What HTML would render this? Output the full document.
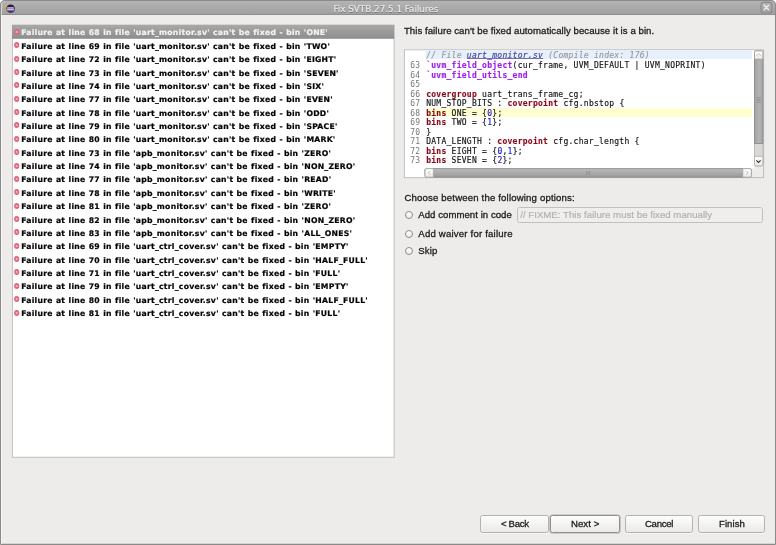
<!DOCTYPE html>
<html lang="en"><head><meta charset="utf-8"><title>Fix SVTB.27.5.1 Failures</title>
<style>
html,body{margin:0;padding:0}
body{width:776px;height:545px;overflow:hidden;background:#fff;position:relative;font-family:"Liberation Sans",sans-serif;color:#3a3a3a}
#win{position:absolute;left:0;top:0;width:776px;height:545px;box-sizing:border-box;background:#edecea;border-radius:5px 5px 0 0;overflow:hidden}
#content{position:absolute;left:0;top:0;width:776px;height:545px;filter:blur(0.3px)}
#frame{position:absolute;left:0;top:0;width:776px;height:545px;box-sizing:border-box;border:1px solid #8c8a88;border-radius:5px 5px 0 0;pointer-events:none;box-shadow:inset 1px 0 0 rgba(255,255,255,.55),inset 0 -1px 0 rgba(140,138,136,.25)}
#title{position:absolute;left:0;top:0;width:776px;height:14px;background:linear-gradient(#b6b6b6,#a1a1a1);border-bottom:1px solid #8f8f8f}
#title .t{position:absolute;left:333.4px;top:2.1px;font:8.8px/15px "DejaVu Sans","Liberation Sans",sans-serif;color:#e8e8e8;-webkit-text-stroke:0.2px #e8e8e8;white-space:pre;text-shadow:0 0.6px 0.4px rgba(0,0,0,.3)}
.r{position:absolute;left:13px;width:380px;height:13.4px;font:bold 7.7px/13px "DejaVu Sans","Liberation Sans",sans-serif;letter-spacing:0.255px;word-spacing:0.32px;color:#000;white-space:pre}
.r span{position:absolute;left:8.15px;top:1.1px;-webkit-text-stroke:0.2px currentColor}
.r.sel{color:#f2f2f2}
.r svg{position:absolute;left:0.8px;top:3.5px}
.lbl{position:absolute;white-space:pre;font-size:9.6px;line-height:12px;color:#1c1c1c;-webkit-text-stroke:0.3px #1c1c1c}
.cl{position:absolute;left:426.2px;font:8px/10px "DejaVu Sans Mono","Liberation Mono",monospace;letter-spacing:0.267px;color:#141414;-webkit-text-stroke:0.15px currentColor;white-space:pre}
.ln{position:absolute;left:410.2px;font:8px/10px "DejaVu Sans Mono","Liberation Mono",monospace;letter-spacing:0.267px;color:#787878;white-space:pre}
.k{color:#8b0a1a;font-weight:bold}
.m{color:#a020f0;font-weight:bold}
.n{color:#2020d0}
.c{color:#9a9a9a;font-style:italic}
.u{color:#45459c;font-style:italic;text-decoration:underline;text-decoration-thickness:0.7px;text-underline-offset:0.3px;text-decoration-color:#7070b8;text-decoration-skip-ink:none}
.radio{position:absolute;width:8px;height:8px;box-sizing:border-box;border:1px solid #8c8b88;border-radius:50%;background:linear-gradient(#fff,#ecebe9)}
#field{position:absolute;left:517px;top:207px;width:246px;height:15.5px;box-sizing:border-box;border:1px solid #c1c0bc;border-radius:2.5px;background:#efeeec}
.btn{position:absolute;top:514.5px;height:18px;box-sizing:border-box;border:1px solid #b3b2ae;border-radius:2.5px;background:linear-gradient(#fdfdfd,#ebeae8);box-shadow:0 1px 0 rgba(255,255,255,.6)}
</style></head>
<body>
<div id="win"><div id="content">
<div id="title"><svg width="11" height="10" viewBox="0 0 11 10" style="position:absolute;left:4.9px;top:3.6px"><defs><linearGradient id="eg" x1="0" y1="0" x2="0" y2="1"><stop offset="0" stop-color="#1f174d"/><stop offset="0.55" stop-color="#2f2468"/><stop offset="1" stop-color="#4a3c8c"/></linearGradient></defs><ellipse cx="4.9" cy="4.7" rx="4.7" ry="4.4" fill="#e39a3c"/><ellipse cx="5.7" cy="4.7" rx="4.3" ry="4.3" fill="url(#eg)"/><rect x="2.2" y="3.3" width="6.6" height="0.9" fill="#dcd9ee"/><rect x="1.9" y="4.6" width="7.3" height="1.1" fill="#ffffff"/><rect x="2.2" y="6" width="6.6" height="0.6" fill="#a9a3d0"/></svg><div class="t">Fix SVTB.27.5.1 Failures</div>
<svg width="14" height="14" viewBox="0 0 14 14" style="position:absolute;left:760px;top:1px"><defs><linearGradient id="cbg" x1="0" y1="0" x2="0" y2="1"><stop offset="0" stop-color="#b4b4b4"/><stop offset="1" stop-color="#a0a0a0"/></linearGradient></defs><rect x="1" y="1.3" width="10.9" height="10.7" rx="2.2" fill="url(#cbg)" stroke="#8b8b8b" stroke-width="1.2"/><path d="M4.2 4.2 L8.6 8.7 M8.6 4.2 L4.2 8.7" stroke="#ececec" stroke-width="1.5" stroke-linecap="round"/></svg>
</div>
<svg width="776" height="545" style="position:absolute;left:0;top:0"><rect x="12.4" y="25.1" width="381.7" height="432.2" fill="#fff" stroke="#bfbebb" stroke-width="1"/><defs><linearGradient id="selg" x1="0" y1="0" x2="0" y2="1"><stop offset="0" stop-color="#a8a8a8"/><stop offset="1" stop-color="#8d8d8d"/></linearGradient></defs><rect x="12" y="24.9" width="382.2" height="13.9" fill="url(#selg)"/></svg>
<div class="r sel" style="top:25.30px"><svg width="6" height="6.4" viewBox="0 0 6 6.4"><ellipse cx="2.7" cy="3" rx="2.6" ry="2.9" fill="#e4667a"/><path d="M2 2.2 L3.4 3.8 M3.4 2.2 L2 3.8" stroke="#fbe3e6" stroke-width="0.75"/></svg><span>Failure at line 68 in file 'uart_monitor.sv' can't be fixed - bin 'ONE'</span></div>
<div class="r" style="top:38.67px"><svg width="6" height="6.4" viewBox="0 0 6 6.4"><ellipse cx="2.7" cy="3" rx="2.6" ry="2.9" fill="#e4667a"/><path d="M2 2.2 L3.4 3.8 M3.4 2.2 L2 3.8" stroke="#fbe3e6" stroke-width="0.75"/></svg><span>Failure at line 69 in file 'uart_monitor.sv' can't be fixed - bin 'TWO'</span></div>
<div class="r" style="top:52.04px"><svg width="6" height="6.4" viewBox="0 0 6 6.4"><ellipse cx="2.7" cy="3" rx="2.6" ry="2.9" fill="#e4667a"/><path d="M2 2.2 L3.4 3.8 M3.4 2.2 L2 3.8" stroke="#fbe3e6" stroke-width="0.75"/></svg><span>Failure at line 72 in file 'uart_monitor.sv' can't be fixed - bin 'EIGHT'</span></div>
<div class="r" style="top:65.41px"><svg width="6" height="6.4" viewBox="0 0 6 6.4"><ellipse cx="2.7" cy="3" rx="2.6" ry="2.9" fill="#e4667a"/><path d="M2 2.2 L3.4 3.8 M3.4 2.2 L2 3.8" stroke="#fbe3e6" stroke-width="0.75"/></svg><span>Failure at line 73 in file 'uart_monitor.sv' can't be fixed - bin 'SEVEN'</span></div>
<div class="r" style="top:78.78px"><svg width="6" height="6.4" viewBox="0 0 6 6.4"><ellipse cx="2.7" cy="3" rx="2.6" ry="2.9" fill="#e4667a"/><path d="M2 2.2 L3.4 3.8 M3.4 2.2 L2 3.8" stroke="#fbe3e6" stroke-width="0.75"/></svg><span>Failure at line 74 in file 'uart_monitor.sv' can't be fixed - bin 'SIX'</span></div>
<div class="r" style="top:92.15px"><svg width="6" height="6.4" viewBox="0 0 6 6.4"><ellipse cx="2.7" cy="3" rx="2.6" ry="2.9" fill="#e4667a"/><path d="M2 2.2 L3.4 3.8 M3.4 2.2 L2 3.8" stroke="#fbe3e6" stroke-width="0.75"/></svg><span>Failure at line 77 in file 'uart_monitor.sv' can't be fixed - bin 'EVEN'</span></div>
<div class="r" style="top:105.52px"><svg width="6" height="6.4" viewBox="0 0 6 6.4"><ellipse cx="2.7" cy="3" rx="2.6" ry="2.9" fill="#e4667a"/><path d="M2 2.2 L3.4 3.8 M3.4 2.2 L2 3.8" stroke="#fbe3e6" stroke-width="0.75"/></svg><span>Failure at line 78 in file 'uart_monitor.sv' can't be fixed - bin 'ODD'</span></div>
<div class="r" style="top:118.89px"><svg width="6" height="6.4" viewBox="0 0 6 6.4"><ellipse cx="2.7" cy="3" rx="2.6" ry="2.9" fill="#e4667a"/><path d="M2 2.2 L3.4 3.8 M3.4 2.2 L2 3.8" stroke="#fbe3e6" stroke-width="0.75"/></svg><span>Failure at line 79 in file 'uart_monitor.sv' can't be fixed - bin 'SPACE'</span></div>
<div class="r" style="top:132.26px"><svg width="6" height="6.4" viewBox="0 0 6 6.4"><ellipse cx="2.7" cy="3" rx="2.6" ry="2.9" fill="#e4667a"/><path d="M2 2.2 L3.4 3.8 M3.4 2.2 L2 3.8" stroke="#fbe3e6" stroke-width="0.75"/></svg><span>Failure at line 80 in file 'uart_monitor.sv' can't be fixed - bin 'MARK'</span></div>
<div class="r" style="top:145.63px"><svg width="6" height="6.4" viewBox="0 0 6 6.4"><ellipse cx="2.7" cy="3" rx="2.6" ry="2.9" fill="#e4667a"/><path d="M2 2.2 L3.4 3.8 M3.4 2.2 L2 3.8" stroke="#fbe3e6" stroke-width="0.75"/></svg><span>Failure at line 73 in file 'apb_monitor.sv' can't be fixed - bin 'ZERO'</span></div>
<div class="r" style="top:159.00px"><svg width="6" height="6.4" viewBox="0 0 6 6.4"><ellipse cx="2.7" cy="3" rx="2.6" ry="2.9" fill="#e4667a"/><path d="M2 2.2 L3.4 3.8 M3.4 2.2 L2 3.8" stroke="#fbe3e6" stroke-width="0.75"/></svg><span>Failure at line 74 in file 'apb_monitor.sv' can't be fixed - bin 'NON_ZERO'</span></div>
<div class="r" style="top:172.37px"><svg width="6" height="6.4" viewBox="0 0 6 6.4"><ellipse cx="2.7" cy="3" rx="2.6" ry="2.9" fill="#e4667a"/><path d="M2 2.2 L3.4 3.8 M3.4 2.2 L2 3.8" stroke="#fbe3e6" stroke-width="0.75"/></svg><span>Failure at line 77 in file 'apb_monitor.sv' can't be fixed - bin 'READ'</span></div>
<div class="r" style="top:185.74px"><svg width="6" height="6.4" viewBox="0 0 6 6.4"><ellipse cx="2.7" cy="3" rx="2.6" ry="2.9" fill="#e4667a"/><path d="M2 2.2 L3.4 3.8 M3.4 2.2 L2 3.8" stroke="#fbe3e6" stroke-width="0.75"/></svg><span>Failure at line 78 in file 'apb_monitor.sv' can't be fixed - bin 'WRITE'</span></div>
<div class="r" style="top:199.11px"><svg width="6" height="6.4" viewBox="0 0 6 6.4"><ellipse cx="2.7" cy="3" rx="2.6" ry="2.9" fill="#e4667a"/><path d="M2 2.2 L3.4 3.8 M3.4 2.2 L2 3.8" stroke="#fbe3e6" stroke-width="0.75"/></svg><span>Failure at line 81 in file 'apb_monitor.sv' can't be fixed - bin 'ZERO'</span></div>
<div class="r" style="top:212.48px"><svg width="6" height="6.4" viewBox="0 0 6 6.4"><ellipse cx="2.7" cy="3" rx="2.6" ry="2.9" fill="#e4667a"/><path d="M2 2.2 L3.4 3.8 M3.4 2.2 L2 3.8" stroke="#fbe3e6" stroke-width="0.75"/></svg><span>Failure at line 82 in file 'apb_monitor.sv' can't be fixed - bin 'NON_ZERO'</span></div>
<div class="r" style="top:225.85px"><svg width="6" height="6.4" viewBox="0 0 6 6.4"><ellipse cx="2.7" cy="3" rx="2.6" ry="2.9" fill="#e4667a"/><path d="M2 2.2 L3.4 3.8 M3.4 2.2 L2 3.8" stroke="#fbe3e6" stroke-width="0.75"/></svg><span>Failure at line 83 in file 'apb_monitor.sv' can't be fixed - bin 'ALL_ONES'</span></div>
<div class="r" style="top:239.22px"><svg width="6" height="6.4" viewBox="0 0 6 6.4"><ellipse cx="2.7" cy="3" rx="2.6" ry="2.9" fill="#e4667a"/><path d="M2 2.2 L3.4 3.8 M3.4 2.2 L2 3.8" stroke="#fbe3e6" stroke-width="0.75"/></svg><span>Failure at line 69 in file 'uart_ctrl_cover.sv' can't be fixed - bin 'EMPTY'</span></div>
<div class="r" style="top:252.59px"><svg width="6" height="6.4" viewBox="0 0 6 6.4"><ellipse cx="2.7" cy="3" rx="2.6" ry="2.9" fill="#e4667a"/><path d="M2 2.2 L3.4 3.8 M3.4 2.2 L2 3.8" stroke="#fbe3e6" stroke-width="0.75"/></svg><span>Failure at line 70 in file 'uart_ctrl_cover.sv' can't be fixed - bin 'HALF_FULL'</span></div>
<div class="r" style="top:265.96px"><svg width="6" height="6.4" viewBox="0 0 6 6.4"><ellipse cx="2.7" cy="3" rx="2.6" ry="2.9" fill="#e4667a"/><path d="M2 2.2 L3.4 3.8 M3.4 2.2 L2 3.8" stroke="#fbe3e6" stroke-width="0.75"/></svg><span>Failure at line 71 in file 'uart_ctrl_cover.sv' can't be fixed - bin 'FULL'</span></div>
<div class="r" style="top:279.33px"><svg width="6" height="6.4" viewBox="0 0 6 6.4"><ellipse cx="2.7" cy="3" rx="2.6" ry="2.9" fill="#e4667a"/><path d="M2 2.2 L3.4 3.8 M3.4 2.2 L2 3.8" stroke="#fbe3e6" stroke-width="0.75"/></svg><span>Failure at line 79 in file 'uart_ctrl_cover.sv' can't be fixed - bin 'EMPTY'</span></div>
<div class="r" style="top:292.70px"><svg width="6" height="6.4" viewBox="0 0 6 6.4"><ellipse cx="2.7" cy="3" rx="2.6" ry="2.9" fill="#e4667a"/><path d="M2 2.2 L3.4 3.8 M3.4 2.2 L2 3.8" stroke="#fbe3e6" stroke-width="0.75"/></svg><span>Failure at line 80 in file 'uart_ctrl_cover.sv' can't be fixed - bin 'HALF_FULL'</span></div>
<div class="r" style="top:306.07px"><svg width="6" height="6.4" viewBox="0 0 6 6.4"><ellipse cx="2.7" cy="3" rx="2.6" ry="2.9" fill="#e4667a"/><path d="M2 2.2 L3.4 3.8 M3.4 2.2 L2 3.8" stroke="#fbe3e6" stroke-width="0.75"/></svg><span>Failure at line 81 in file 'uart_ctrl_cover.sv' can't be fixed - bin 'FULL'</span></div>
<div class="lbl" style="left:403.9px;top:24.5px;letter-spacing:0.06px">This failure can't be fixed automatically because it is a bin.</div>
<svg width="776" height="545" style="position:absolute;left:0;top:0"><rect x="404.4" y="49.9" width="359.2" height="127.7" fill="#edecea" stroke="#bdbcb9" stroke-width="1"/><rect x="404.9" y="50.4" width="349.4" height="118.1" fill="#fff"/><rect x="404.9" y="168" width="19.7" height="9.1" fill="#fff"/></svg>
<div style="position:absolute;left:425.8px;top:50.4px;width:326.2px;height:8.6px;background:#e6effc"></div>
<div style="position:absolute;left:425.8px;top:107.6px;width:326.2px;height:9.4px;background:#ffffd2"></div>
<div class="cl" style="top:50.80px"><span class="c">// File </span><span class="u">uart_monitor.sv</span><span class="c"> (Compile index: 176)</span></div>
<div class="ln" style="top:61.02px">63</div>
<div class="cl" style="top:61.02px"><span class="m">`uvm_field_object</span>(cur_frame, UVM_DEFAULT | UVM_NOPRINT)</div>
<div class="ln" style="top:70.54px">64</div>
<div class="cl" style="top:70.54px"><span class="m">`uvm_field_utils_end</span></div>
<div class="ln" style="top:80.06px">65</div>
<div class="ln" style="top:89.58px">66</div>
<div class="cl" style="top:89.58px"><span class="k">covergroup</span> uart_trans_frame_cg;</div>
<div class="ln" style="top:99.10px">67</div>
<div class="cl" style="top:99.10px">NUM_STOP_BITS : <span class="k">coverpoint</span> cfg.nbstop {</div>
<div class="ln" style="top:108.62px">68</div>
<div class="cl" style="top:108.62px"><span class="k">bins</span> ONE = {<span class="n">0</span>};</div>
<div class="ln" style="top:118.14px">69</div>
<div class="cl" style="top:118.14px"><span class="k">bins</span> TWO = {<span class="n">1</span>};</div>
<div class="ln" style="top:127.66px">70</div>
<div class="cl" style="top:127.66px">}</div>
<div class="ln" style="top:137.18px">71</div>
<div class="cl" style="top:137.18px">DATA_LENGTH : <span class="k">coverpoint</span> cfg.char_length {</div>
<div class="ln" style="top:146.70px">72</div>
<div class="cl" style="top:146.70px"><span class="k">bins</span> EIGHT = {<span class="n">0</span>,<span class="n">1</span>};</div>
<div class="ln" style="top:156.22px">73</div>
<div class="cl" style="top:156.22px"><span class="k">bins</span> SEVEN = {<span class="n">2</span>};</div>
<svg width="776" height="545" style="position:absolute;left:0;top:0">
<defs>
<linearGradient id="vth" x1="0" y1="0" x2="1" y2="0"><stop offset="0" stop-color="#a2a2a2"/><stop offset="0.55" stop-color="#b4b4b4"/><stop offset="1" stop-color="#a5a5a5"/></linearGradient>
<linearGradient id="hth" x1="0" y1="0" x2="0" y2="1"><stop offset="0" stop-color="#bcbcbc"/><stop offset="1" stop-color="#9a9a9a"/></linearGradient>
<linearGradient id="sbb" x1="0" y1="0" x2="0" y2="1"><stop offset="0" stop-color="#ffffff"/><stop offset="1" stop-color="#e9e8e6"/></linearGradient>
</defs>
<rect x="754.5" y="50.9" width="8.4" height="115" rx="1.5" fill="#dad8d5" stroke="#bab9b6" stroke-width="0.9"/>
<rect x="754.5" y="59" width="8.4" height="84.5" fill="url(#vth)" stroke="#8d8d8d" stroke-width="0.9"/>
<path d="M754.5 59.2 V52.4 Q754.5 50.9 756 50.9 H761.4 Q762.9 50.9 762.9 52.4 V59.2 Z" fill="url(#sbb)" stroke="#a3a3a3" stroke-width="0.9"/>
<path d="M754.5 156.3 V164.4 Q754.5 165.9 756 165.9 H761.4 Q762.9 165.9 762.9 164.4 V156.3 Z" fill="url(#sbb)" stroke="#b0afac" stroke-width="0.9"/>
<path d="M756.4 55.8 L758.7 53.8 L761 55.8" fill="none" stroke="#bcbcbc" stroke-width="0.9"/>
<path d="M756.4 160.4 L758.5 162.5 L760.6 160.4" fill="none" stroke="#333" stroke-width="1.15"/>
<path d="M756.7 97.7 h4 M756.7 99.3 h4 M756.7 100.9 h4 M756.7 102.5 h4" stroke="#8c8c8c" stroke-width="0.7"/>
<rect x="425" y="168.6" width="326.4" height="8.6" rx="1.5" fill="url(#hth)" stroke="#8d8d8d" stroke-width="0.9"/>
<path d="M433.4 168.6 H426.5 Q425 168.6 425 170.1 V175.7 Q425 177.2 426.5 177.2 H433.4 Z" fill="url(#sbb)" stroke="#aaa9a6" stroke-width="0.9"/>
<path d="M742.8 168.6 H749.9 Q751.4 168.6 751.4 170.1 V175.7 Q751.4 177.2 749.9 177.2 H742.8 Z" fill="url(#sbb)" stroke="#aaa9a6" stroke-width="0.9"/>
<path d="M430.2 170.8 L428.1 172.9 L430.2 175" fill="none" stroke="#c2c2c2" stroke-width="0.9"/>
<path d="M746 170.8 L748.1 172.9 L746 175" fill="none" stroke="#c2c2c2" stroke-width="0.9"/>
<path d="M586.6 170.9 v4 M588.2 170.9 v4 M589.8 170.9 v4" stroke="#8c8c8c" stroke-width="0.7"/>
</svg>
<div class="lbl" style="left:404.4px;top:191.8px;letter-spacing:0.168px">Choose between the following options:</div>
<div class="radio" style="left:405.4px;top:210.5px"></div><div class="lbl" style="left:418.3px;top:208.6px;letter-spacing:0.04px">Add comment in code</div>
<div class="radio" style="left:405.4px;top:229.7px"></div><div class="lbl" style="left:418.3px;top:227.6px;letter-spacing:0.195px">Add waiver for failure</div>
<div class="radio" style="left:405.4px;top:247.0px"></div><div class="lbl" style="left:418.3px;top:245.0px;letter-spacing:0.1px">Skip</div>
<div id="field"></div><div class="lbl" style="left:520.2px;top:209.1px;letter-spacing:0.038px;color:#b3b2af;-webkit-text-stroke:0.2px #b3b2af">// FIXME: This failure must be fixed manually</div>
<div class="btn" style="left:480.3px;width:68.7px;"></div><div class="lbl" style="left:500.9px;top:517.6px;letter-spacing:-0.3px">&lt; Back</div>
<div class="btn" style="left:550px;width:70.0px;border-color:#918f8b;box-shadow:0 0 0 0.6px #aeada9;"></div><div class="lbl" style="left:571px;top:517.6px;letter-spacing:0.05px">Next &gt;</div>
<div class="btn" style="left:625.3px;width:67.4px;"></div><div class="lbl" style="left:644.9px;top:517.6px;letter-spacing:-0.25px">Cancel</div>
<div class="btn" style="left:698px;width:67.0px;"></div><div class="lbl" style="left:719px;top:517.6px;letter-spacing:0.05px">Finish</div>
</div></div><div id="frame"></div>
</body></html>
